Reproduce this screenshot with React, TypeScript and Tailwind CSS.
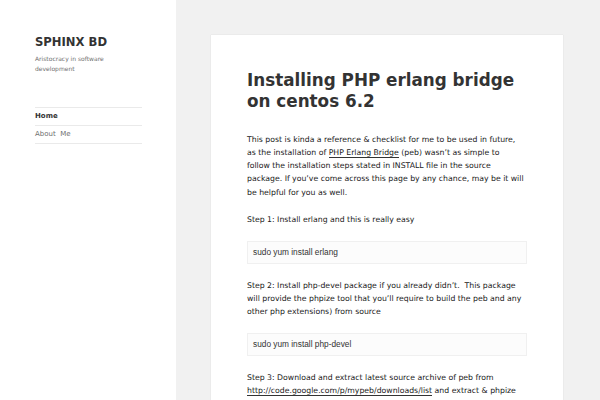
export default function App() {
  return (
    <div className="flex h-[400px] w-[600px] overflow-hidden bg-[#f1f1f1] text-[#333] font-['DejaVu_Sans',sans-serif]">
      {/* Sidebar */}
      <aside className="w-[176px] shrink-0 bg-white pl-[35px] pt-[34px]">
        <h1 className="text-[11.6px] font-bold leading-[16px] text-[#333]">SPHINX BD</h1>
        <p className="mt-[4px] w-[80px] text-[6px] leading-[10px] text-[#707070]">
          Aristocracy in software development
        </p>
        <nav className="mt-[33px] w-[107px] border-t border-[#eaeaea] text-[7px]">
          <div className="flex h-[18px] items-center border-b border-[#eaeaea] font-bold text-[#333]">Home</div>
          <div className="flex h-[18px] items-center border-b border-[#eaeaea] text-[#707070]">About&nbsp;&nbsp;Me</div>
        </nav>
      </aside>

      {/* Content */}
      <main className="flex-1 pl-[35px] pt-[35px]">
        <article className="h-full w-[352px] bg-white px-[36px] pt-[34.5px] shadow-[0_0_1px_rgba(0,0,0,0.15)]">
          <h2 className="mb-[21px] text-[16.8px] font-bold leading-[21px]">
            Installing PHP erlang bridge on centos 6.2
          </h2>
          <div className="space-y-[14.5px] text-[7.75px] leading-[13.3px] text-[#222] whitespace-nowrap">
            <p>
              This post is kinda a reference &amp; checklist for me to be used in future,
              <br />
              as the installation of <a className="border-b border-[#333]">PHP Erlang Bridge</a> (peb) wasn’t as simple to
              <br />
              follow the installation steps stated in INSTALL file in the source
              <br />
              package. If you’ve come across this page by any chance, may be it will
              <br />
              be helpful for you as well.
            </p>
            <p>Step 1: Install erlang and this is really easy</p>
            <div className="flex h-[23px] items-center border border-[#f0f0f0] bg-[#fcfcfc] px-[5px] font-['Liberation_Sans',sans-serif] text-[8.3px] text-[#333]">
              sudo yum install erlang
            </div>
            <p>
              Step 2: Install php-devel package if you already didn’t.&nbsp; This package
              <br />
              will provide the phpize tool that you’ll require to build the peb and any
              <br />
              other php extensions) from source
            </p>
            <div className="flex h-[23px] items-center border border-[#f0f0f0] bg-[#fcfcfc] px-[5px] font-['Liberation_Sans',sans-serif] text-[8.3px] text-[#333]">
              sudo yum install php-devel
            </div>
            <p>
              Step 3: Download and extract latest source archive of peb from
              <br />
              <a className="border-b border-[#333]">http://code.google.com/p/mypeb/downloads/list</a> and extract &amp; phpize
            </p>
          </div>
        </article>
      </main>
    </div>
  );
}
